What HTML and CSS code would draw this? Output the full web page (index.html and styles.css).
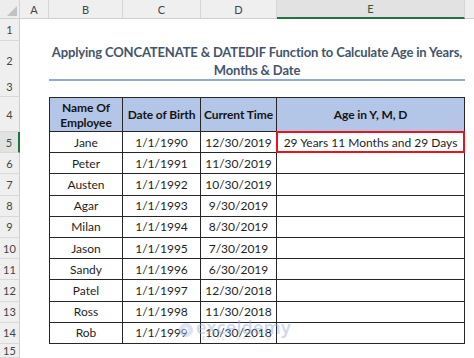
FILE: index.html
```html
<!DOCTYPE html>
<html>
<head>
<meta charset="utf-8">
<link rel="stylesheet" href="styles.css">
</head>
<body>
<div class="sheet">
  <div class="row colhead">
    <div class="corner"><span class="tri"></span></div>
    <div class="ch">A</div>
    <div class="ch">B</div>
    <div class="ch">C</div>
    <div class="ch">D</div>
    <div class="ch sel">E</div>
    <div class="ch last"></div>
  </div>
  <div class="row r1"><div class="rh">1</div></div>
  <div class="row r2">
    <div class="rh">2</div><div></div>
    <div class="title"><span>Applying CONCATENATE &amp; DATEDIF Function to Calculate Age in Years,</span><span>Months &amp; Date</span></div>
  </div>
  <div class="row r3"><div class="rh">3</div></div>
  <div class="row r4">
    <div class="rh">4</div><div></div>
    <div class="th first">Name Of<br>Employee</div>
    <div class="th">Date of Birth</div>
    <div class="th">Current Time</div>
    <div class="th">Age in Y, M, D</div>
  </div>
  <div class="row rd">
    <div class="rh selrow">5</div><div></div>
    <div class="td first">Jane</div><div class="td">1/1/1990</div><div class="td">12/30/2019</div><div class="td result">29 Years 11 Months and 29 Days</div>
  </div>
  <div class="row rd">
    <div class="rh">6</div><div></div>
    <div class="td first">Peter</div><div class="td">1/1/1991</div><div class="td">11/30/2019</div><div class="td"></div>
  </div>
  <div class="row rd">
    <div class="rh">7</div><div></div>
    <div class="td first">Austen</div><div class="td">1/1/1992</div><div class="td">10/30/2019</div><div class="td"></div>
  </div>
  <div class="row rd">
    <div class="rh">8</div><div></div>
    <div class="td first">Agar</div><div class="td">1/1/1993</div><div class="td">9/30/2019</div><div class="td"></div>
  </div>
  <div class="row rd">
    <div class="rh">9</div><div></div>
    <div class="td first">Milan</div><div class="td">1/1/1994</div><div class="td">8/30/2019</div><div class="td"></div>
  </div>
  <div class="row rd">
    <div class="rh">10</div><div></div>
    <div class="td first">Jason</div><div class="td">1/1/1995</div><div class="td">7/30/2019</div><div class="td"></div>
  </div>
  <div class="row rd">
    <div class="rh">11</div><div></div>
    <div class="td first">Sandy</div><div class="td">1/1/1996</div><div class="td">6/30/2019</div><div class="td"></div>
  </div>
  <div class="row rd">
    <div class="rh">12</div><div></div>
    <div class="td first">Patel</div><div class="td">1/1/1997</div><div class="td">12/30/2018</div><div class="td"></div>
  </div>
  <div class="row rd">
    <div class="rh">13</div><div></div>
    <div class="td first">Ross</div><div class="td">1/1/1998</div><div class="td">11/30/2018</div><div class="td"></div>
  </div>
  <div class="row rd">
    <div class="rh">14</div><div></div>
    <div class="td first">Rob</div><div class="td">1/1/1999</div><div class="td">10/30/2018</div><div class="td"></div>
  </div>
  <div class="row r15"><div class="rh">15</div></div>

  <div class="watermark">
    <svg class="wm-icon" width="16" height="16" viewBox="0 0 18 18"><circle cx="9" cy="9" r="8" fill="#b3c3ea"/><path d="M5 11 L9 5 L13 11 Z" fill="#ffffff"/></svg>
    <div class="wm-text">
      <span class="wm-name">exceldemy</span>
      <span class="wm-sub">EXCEL · DATA · BI</span>
    </div>
  </div>
</div>
</body>
</html>
```
FILE: styles.css
```css
html, body {
  margin: 0;
  padding: 0;
  background: #ffffff;
  overflow: hidden;
}
.sheet {
  position: relative;
  width: 474px;
  height: 358px;
  overflow: hidden;
  font-family: Lato, "Open Sans", sans-serif;
  color: #1e1e1e;
}
.row {
  display: grid;
  grid-template-columns: 20px 29px 74px 78px 76px 188px 9px;
}
.colhead { height: 19px; }
.r1 { height: 22px; }
.r2 { height: 36px; }
.r3 { height: 20px; }
.r4 { height: 35px; }
.rd { height: 21.2px; }
.r15 { height: 14px; }

.corner {
  position: relative;
  background: #ededed;
  border-right: 1px solid #d4d4d4;
  border-bottom: 1px solid #cfcfcf;
}
.tri {
  position: absolute;
  right: 2px;
  bottom: 2px;
  width: 0;
  height: 0;
  border-left: 10px solid transparent;
  border-bottom: 10px solid #c2c2c2;
}
.ch {
  background: #efefef;
  border-right: 1px solid #d6d6d6;
  border-bottom: 1px solid #cfcfcf;
  font-size: 11px;
  color: #444;
  display: flex;
  align-items: center;
  justify-content: center;
}
.ch.sel {
  background: #e2e2e2;
  border-bottom: 2px solid #217346;
  color: #2a5b3c;
}
.ch.last { border-right: none; }

.rh {
  background: #efefef;
  border-right: 1px solid #cfcfcf;
  border-bottom: 1px solid #d9d9d9;
  font-size: 11px;
  color: #444;
  display: flex;
  align-items: center;
  justify-content: center;
}
.rh.selrow {
  background: #e2e2e2;
  border-right: 2px solid #217346;
  color: #2a5b3c;
}

.title {
  grid-column: 3 / 7;
  border-bottom: 2px solid #8fa9dc;
  font-weight: 700;
  font-size: 13px;
  letter-spacing: -0.15px;
  line-height: 18px;
  color: #44546a;
  text-align: center;
  white-space: nowrap;
  display: flex;
  flex-direction: column;
  align-items: center;
  justify-content: center;
  padding-top: 2px;
}

.th {
  background: #b4c6e7;
  border-top: 1px solid #262626;
  border-right: 1px solid #262626;
  border-bottom: 1px solid #262626;
  font-weight: 700;
  font-size: 12px;
  letter-spacing: -0.1px;
  line-height: 15px;
  color: #141414;
  text-align: center;
  white-space: nowrap;
  display: flex;
  align-items: center;
  justify-content: center;
}
.td {
  border-right: 1px solid #262626;
  border-bottom: 1px solid #262626;
  font-size: 12px;
  color: #1e1e1e;
  display: flex;
  align-items: center;
  justify-content: center;
  white-space: nowrap;
}
.first { border-left: 1px solid #262626; }
.td.result { position: relative; }
.td.result::after {
  content: "";
  position: absolute;
  left: -1px;
  top: -1px;
  right: -1px;
  bottom: -1px;
  border: 2px solid #e8141c;
}

.watermark {
  position: absolute;
  left: 178px;
  top: 318px;
  display: flex;
  align-items: center;
  gap: 2px;
  opacity: 0.45;
  pointer-events: none;
}
.wm-text {
  display: flex;
  flex-direction: column;
  line-height: 1;
}
.wm-name {
  font-family: "Open Sans", sans-serif;
  font-weight: 600;
  font-size: 18px;
  color: #93a9e0;
  letter-spacing: 0.2px;
}
.wm-sub {
  font-size: 5px;
  letter-spacing: 2px;
  color: #9aa6c4;
  padding-left: 6px;
}
```
